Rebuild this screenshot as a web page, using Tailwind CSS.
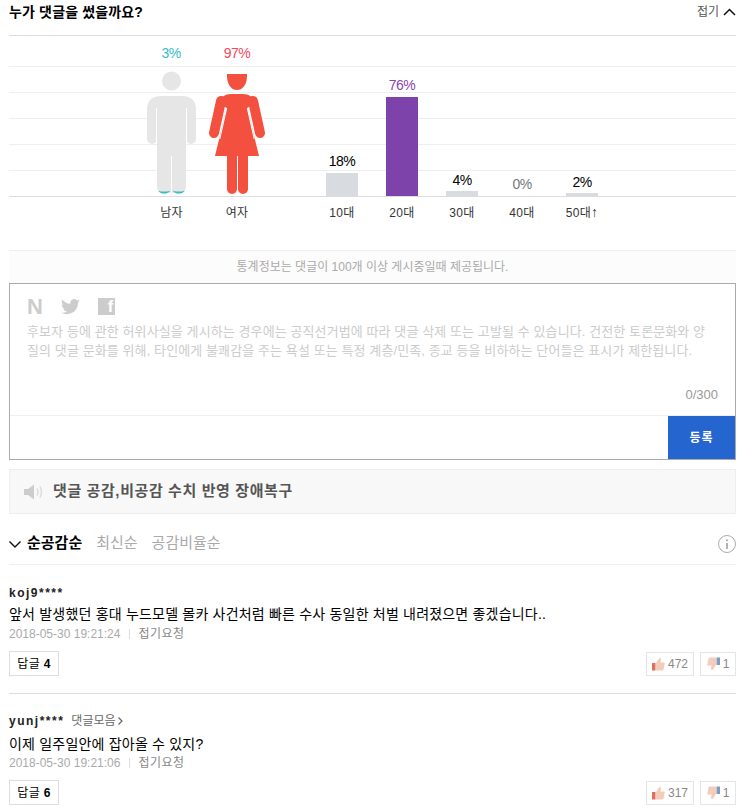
<!DOCTYPE html>
<html lang="ko">
<head>
  <meta charset="UTF-8" />
  <title>댓글</title>
  <script src="https://cdn.jsdelivr.net/npm/@tailwindcss/browser@4"></script>
</head>
<body class="bg-white text-[#222] [font-family:'Liberation_Sans','Noto_Sans_CJK_KR',sans-serif]">
<div class="w-[743px] h-[811px] overflow-hidden pl-[9px] pr-[7px]">

  <!-- Header -->
  <div class="h-[36px] border-b border-[#ddd] flex justify-between pt-[3px]">
    <h2 class="text-[14px] leading-[18px] font-bold text-black tracking-[0.15px]">누가 댓글을 썼을까요?</h2>
    <button class="flex items-center h-[18px] gap-[4px] text-[12px] text-[#555]">접기
      <svg width="13" height="8" viewBox="0 0 13 8" fill="none" stroke="#111" stroke-width="1.5"><path d="M1 7L6.5 1.5L12 7"/></svg>
    </button>
  </div>

  <!-- Chart -->
  <div class="relative h-[161px] border-b border-[#ddd]">
    <div class="absolute inset-0 flex flex-col justify-end">
      <div class="h-[26px] border-t border-[#eee]"></div>
      <div class="h-[26px] border-t border-[#eee]"></div>
      <div class="h-[26px] border-t border-[#eee]"></div>
      <div class="h-[26px] border-t border-[#eee]"></div>
      <div class="h-[26px] border-t border-[#eee]"></div>
    </div>
    <div class="relative h-full flex items-end pl-[138px] tracking-[-0.5px]">
      <div class="w-[49px] flex flex-col items-center">
        <span class="text-[14px] leading-[16px] mb-[9px] text-[#35bcc6] -ml-[1px]">3%</span>
        <svg width="49" height="126" viewBox="0 0 49 126" class="block">
          <circle cx="24.5" cy="11" r="9.5" fill="#e6e6e6"/>
          <path fill="#e6e6e6" d="M14 26H35Q49 26 49 40V69A5 5 0 0 1 39 69V117A6 6 0 0 1 33 123H16A6 6 0 0 1 10 117V69A5 5 0 0 1 0 69V40Q0 26 14 26Z"/>
          <path stroke="#fff" stroke-width="1" d="M9.5 38V74M39.500 38V74M24.500 86V124"/>
          <path fill="#35bcc6" d="M11.300 120.700Q17 122.500 23 120.700Q21.500 123.500 17 123.500Q13 123.500 11.300 120.700ZM26 120.700Q32 122.500 37.700 120.700Q36 123.500 32 123.500Q27.500 123.500 26 120.700Z"/>
        </svg>
      </div>
      <div class="w-[60px] ml-[11px] flex flex-col items-center">
        <span class="text-[14px] leading-[16px] mb-[9px] text-[#f4485c]">97%</span>
        <svg width="60" height="126" viewBox="0 0 60 126" class="block">
          <g fill="#f4503f">
            <path d="M20 4H40C40.500 14 36 20 30 20C24 20 19.500 14 20 4Z"/>
            <path d="M24 24H36C42 24 46 27 48 33L40.300 38L52 86H8L19.700 38L12 33C14 27 18 24 24 24Z"/>
            <rect x="20" y="80" width="10" height="44" rx="5"/>
            <rect x="31" y="80" width="10" height="44" rx="5"/>
            <rect x="20" y="80" width="10" height="20"/>
            <rect x="31" y="80" width="10" height="20"/>
          </g>
          <path fill="none" stroke="#f4503f" stroke-width="10" stroke-linecap="round" d="M14 31L7 63M46 31L53 63"/>
          <path stroke="#fff" stroke-width="1" fill="none" d="M19.700 38L12.800 69M40.300 38L47.200 69"/>
        </svg>
      </div>
      <div class="ml-[59px] flex items-end gap-[28px]">
        <div class="w-[32px] flex flex-col items-center">
          <span class="text-[14px] leading-[16px] mb-[4px] text-black whitespace-nowrap">18%</span>
          <div class="w-[32px] h-[23px] bg-[#d8dce0]"></div>
        </div>
        <div class="w-[32px] flex flex-col items-center">
          <span class="text-[14px] leading-[16px] mb-[4px] text-[#8e44ad] whitespace-nowrap">76%</span>
          <div class="w-[32px] h-[99px] bg-[#7d43aa]"></div>
        </div>
        <div class="w-[32px] flex flex-col items-center">
          <span class="text-[14px] leading-[16px] mb-[3px] text-black whitespace-nowrap">4%</span>
          <div class="w-[32px] h-[5px] bg-[#d8dce0]"></div>
        </div>
        <div class="w-[32px] flex flex-col items-center">
          <span class="text-[14px] leading-[16px] mb-[4px] text-[#777] whitespace-nowrap">0%</span>
        </div>
        <div class="w-[32px] flex flex-col items-center">
          <span class="text-[14px] leading-[16px] mb-[3px] text-black whitespace-nowrap">2%</span>
          <div class="w-[32px] h-[3px] bg-[#d8dce0]"></div>
        </div>
      </div>
    </div>
  </div>

  <!-- Axis labels -->
  <div class="h-[53px] flex pl-[138px] pt-[8px] text-[12px] leading-[16px] text-[#333] tracking-[0.3px]">
    <span class="w-[49px] text-center">남자</span>
    <span class="w-[60px] ml-[11px] text-center">여자</span>
    <div class="ml-[59px] flex gap-[28px]">
      <span class="w-[32px] text-center whitespace-nowrap">10대</span>
      <span class="w-[32px] text-center whitespace-nowrap">20대</span>
      <span class="w-[32px] text-center whitespace-nowrap">30대</span>
      <span class="w-[32px] text-center whitespace-nowrap">40대</span>
      <span class="w-[32px] flex justify-center whitespace-nowrap">50대<span class="text-[14px] leading-[15px]">↑</span></span>
    </div>
  </div>

  <!-- Stats note -->
  <div class="h-[33px] border-t border-[#eee] bg-[#fcfcfc] flex items-center justify-center text-[12px] text-[#aaa]">통계정보는 댓글이 100개 이상 게시중일때 제공됩니다.</div>

  <!-- Comment form -->
  <div class="h-[177px] border border-[#aaa] flex flex-col">
    <div class="h-[132px] border-b border-[#eee] pl-[17px] pr-[17px] pt-[14px] relative">
      <div class="flex items-center h-[17px] text-[#ccc]">
        <span class="w-[17px] text-[22px] leading-[17px] font-bold">N</span>
        <svg class="ml-[17px]" width="19" height="16" viewBox="0 0 24 20" fill="#ccc"><path d="M24 2.400c-.9.4-1.800.7-2.800.8 1-.6 1.800-1.600 2.200-2.700-1 .6-2 1-3.100 1.200C19.300.7 18 0 16.600 0c-2.700 0-4.900 2.200-4.900 4.900 0 .4 0 .8.1 1.100C7.700 5.800 4.100 3.900 1.700.9c-.4.7-.7 1.600-.7 2.500 0 1.700.9 3.200 2.200 4.100-.8 0-1.600-.2-2.200-.6v.1c0 2.400 1.700 4.400 3.900 4.800-.4.1-.8.2-1.300.2-.3 0-.6 0-.9-.1.6 2 2.400 3.400 4.600 3.400-1.700 1.300-3.800 2.100-6.100 2.100-.4 0-.8 0-1.200-.1C2.200 18.300 4.800 19.100 7.500 19.100c9.100 0 14-7.500 14-14v-.6c1-.7 1.800-1.600 2.500-2.100z"/></svg>
        <span class="ml-[18px] w-[17px] h-[17px] bg-[#ccc] text-white text-[16px] leading-[18px] font-bold text-right pr-[2px]">f</span>
      </div>
      <p class="mt-[7px] text-[13px] leading-[19px] tracking-[0.1px] text-[#ccc] whitespace-nowrap">후보자 등에 관한 허위사실을 게시하는 경우에는 공직선거법에 따라 댓글 삭제 또는 고발될 수 있습니다. 건전한 토론문화와 양<br>질의 댓글 문화를 위해, 타인에게 불쾌감을 주는 욕설 또는 특정 계층/민족, 종교 등을 비하하는 단어들은 표시가 제한됩니다.</p>
      <span class="absolute right-[17px] bottom-[12px] text-[13px] leading-[16px] text-[#999]">0/300</span>
    </div>
    <div class="flex-1 flex justify-end">
      <button class="w-[67px] bg-[#2565cf] text-white text-[12px] font-bold tracking-[1px]">등록</button>
    </div>
  </div>

  <!-- Notice -->
  <div class="mt-[9px] h-[45px] border border-[#eee] bg-[#f8f8f8] flex items-center pl-[14px]">
    <svg width="20" height="18" viewBox="0 0 20 18" fill="none"><path fill="#ccc" d="M0 6H4L10 1.500V16.500L4 12H0Z"/><path stroke="#ddd" stroke-width="1.500" d="M13 5.500Q15 9 13 12.500M16 3.500Q19 9 16 14.500"/></svg>
    <span class="ml-[9px] text-[15px] font-bold text-[#555] tracking-[0.6px]">댓글 공감,비공감 수치 반영 장애복구</span>
  </div>

  <!-- Sort -->
  <div class="h-[51px] border-b border-[#eee] flex items-center pt-[9px] text-[15px]">
    <svg width="12" height="8" viewBox="0 0 12 8" fill="none" stroke="#111" stroke-width="1.400"><path d="M.5 1.500L6 7L11.500 1.500"/></svg>
    <span class="ml-[6px] font-bold text-black">순공감순</span>
    <span class="ml-[14px] text-[#aaa]">최신순</span>
    <span class="ml-[14px] text-[#aaa]">공감비율순</span>
    <svg class="ml-auto" width="18" height="18" viewBox="0 0 18 18" fill="none"><circle cx="9" cy="9" r="8.500" stroke="#aaa"/><path stroke="#999" stroke-width="1.500" d="M9 8V14M9 4.500V6.200"/></svg>
  </div>

  <!-- Comment 1 -->
  <div class="border-b border-[#ddd] pt-[20px] pb-[17px]">
    <div class="h-[16px] flex items-center text-[12px] font-bold text-[#222] tracking-[1.500px]">koj9****</div>
    <p class="mt-[5px] text-[14px] leading-[16px] tracking-[0.2px] text-black">앞서 발생했던 홍대 누드모델 몰카 사건처럼 빠른 수사 동일한 처벌 내려졌으면 좋겠습니다..</p>
    <div class="mt-[4px] flex items-center h-[16px] text-[12px]">
      <span class="text-[#aaa]">2018-05-30 19:21:24</span>
      <span class="ml-[9px] mr-[8px] h-[10px] border-l border-[#ddd]"></span>
      <span class="text-[#888] tracking-[0.500px]">접기요청</span>
    </div>
    <div class="mt-[9px] flex items-center justify-between">
      <button class="w-[50px] h-[25px] border border-[#ddd] text-[12px] text-black tracking-[0.3px]">답글 <b>4</b></button>
      <div class="flex gap-[6px]">
        <span class="w-[48px] h-[24px] border border-[#e5e5e5] flex items-center justify-center gap-[3px] text-[12px] text-[#888]">
          <svg width="13" height="14" viewBox="0 0 13 14"><path fill="#f3cdb9" d="M4 6L7 1.500C8 .5 9 1 9 2.500L8.500 5.500H12C13 5.500 13 7 12.500 7.500L11.500 12.500C11.300 13.300 10.800 13.500 10 13.500H4Z"/><rect x="0" y="6" width="3.500" height="7.500" fill="#e0705c"/></svg>472</span>
        <span class="w-[36px] h-[24px] border border-[#e5e5e5] flex items-center justify-center gap-[3px] text-[12px] text-[#888]">
          <svg width="13" height="14" viewBox="0 0 13 14"><path fill="#f3cdb9" d="M9 8L6 12.500C5 13.500 4 13 4 11.500L4.500 8.500H1C0 8.500 0 7 .5 6.500L1.500 1.500C1.700.7 2.200.5 3 .5H9Z"/><rect x="9.500" y=".5" width="3.500" height="7.500" fill="#7f9cc0"/></svg>1</span>
      </div>
    </div>
  </div>

  <!-- Comment 2 -->
  <div class="pt-[19px]">
    <div class="h-[16px] flex items-center text-[12px]">
      <span class="font-bold text-[#222] tracking-[1.500px]">yunj****</span>
      <span class="ml-[7px] text-[#666]">댓글모음</span>
      <svg class="ml-[2px]" width="5" height="8" viewBox="0 0 5 8" fill="none" stroke="#666" stroke-width="1.200"><path d="M.5.5L4 4L.5 7.500"/></svg>
    </div>
    <p class="mt-[7px] text-[14px] leading-[16px] tracking-[0.2px] text-black">이제 일주일안에 잡아올 수 있지?</p>
    <div class="mt-[3px] flex items-center h-[16px] text-[12px]">
      <span class="text-[#aaa]">2018-05-30 19:21:06</span>
      <span class="ml-[9px] mr-[8px] h-[10px] border-l border-[#ddd]"></span>
      <span class="text-[#888] tracking-[0.500px]">접기요청</span>
    </div>
    <div class="mt-[9px] flex items-center justify-between">
      <button class="w-[50px] h-[25px] border border-[#ddd] text-[12px] text-black tracking-[0.3px]">답글 <b>6</b></button>
      <div class="flex gap-[6px]">
        <span class="w-[48px] h-[24px] border border-[#e5e5e5] flex items-center justify-center gap-[3px] text-[12px] text-[#888]">
          <svg width="13" height="14" viewBox="0 0 13 14"><path fill="#f3cdb9" d="M4 6L7 1.500C8 .5 9 1 9 2.500L8.500 5.500H12C13 5.500 13 7 12.500 7.500L11.500 12.500C11.300 13.300 10.800 13.500 10 13.500H4Z"/><rect x="0" y="6" width="3.500" height="7.500" fill="#e0705c"/></svg>317</span>
        <span class="w-[36px] h-[24px] border border-[#e5e5e5] flex items-center justify-center gap-[3px] text-[12px] text-[#888]">
          <svg width="13" height="14" viewBox="0 0 13 14"><path fill="#f3cdb9" d="M9 8L6 12.500C5 13.500 4 13 4 11.500L4.500 8.500H1C0 8.500 0 7 .5 6.500L1.500 1.500C1.700.7 2.200.5 3 .5H9Z"/><rect x="9.500" y=".5" width="3.500" height="7.500" fill="#7f9cc0"/></svg>1</span>
      </div>
    </div>
  </div>

</div>
</body>
</html>
